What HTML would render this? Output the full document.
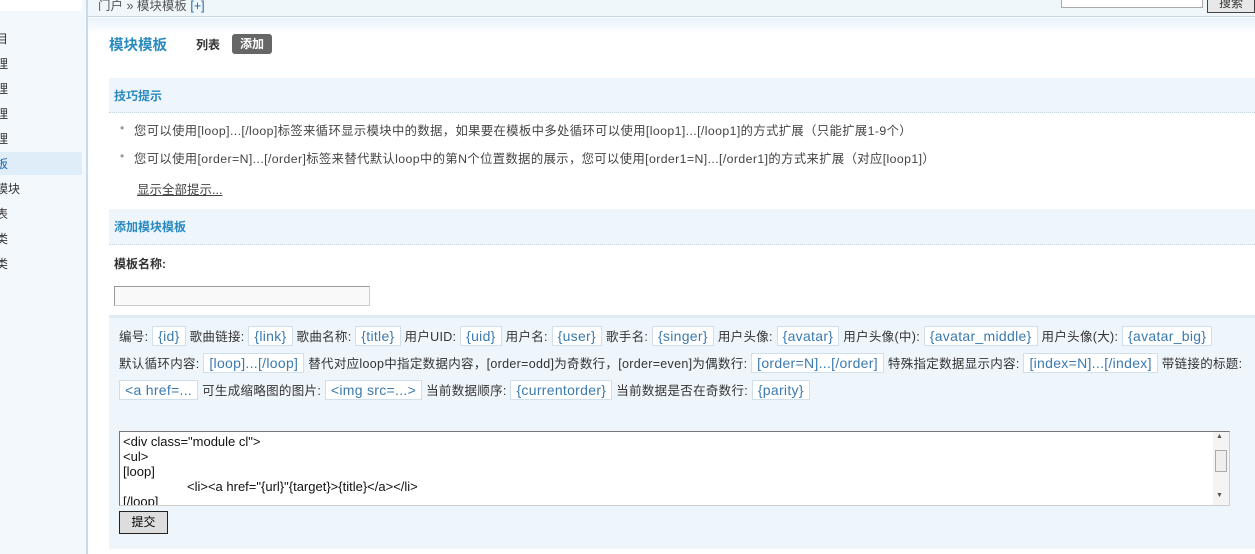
<!DOCTYPE html>
<html><head><meta charset="utf-8"><style>
*{margin:0;padding:0;box-sizing:border-box}
body{width:1255px;height:554px;overflow:hidden;background:#fff;font:12px "Liberation Sans","Noto Sans CJK SC",sans-serif;color:#333;position:relative}
.a{position:absolute;white-space:nowrap}
.side{left:0;top:0;width:88px;height:554px;background:#f2f8fc;border-right:2px solid #c5dbec}
.top{left:88px;top:0;width:1167px;height:17px;background:#f0f7fb;border-bottom:1px solid #c5d6e4}
.si{left:-4px;font-size:12px;color:#333}
.tag{display:inline-block;border:1px solid #cfe0ec;background:#fff;color:#3a7ab0;padding:0 5px;height:20px;line-height:18px;font-size:14px;margin-right:4px}
.row{left:119px;font-size:12.5px;line-height:22px;letter-spacing:0.3px}
.tip{letter-spacing:0.4px;font-size:12.3px}
</style></head><body>
<div class="a side"></div>
<div class="a" style="left:0;top:0;width:82px;height:11px;background:#fff"></div>
<div class="a" style="left:0;top:152px;width:82px;height:23px;background:#dfedf8"></div>
<div class="a si" style="top:30px">目</div>
<div class="a si" style="top:55px">理</div>
<div class="a si" style="top:80px">理</div>
<div class="a si" style="top:105px">理</div>
<div class="a si" style="top:130px">理</div>
<div class="a si" style="top:155px;color:#2366a8">板</div>
<div class="a si" style="top:180px">模块</div>
<div class="a si" style="top:205px">表</div>
<div class="a si" style="top:230px">类</div>
<div class="a si" style="top:255px">类</div>
<div class="a top"></div>
<div class="a" style="left:98px;top:-5px;color:#555;font-size:12.5px">门户 » 模块模板 <span style="color:#2366a8">[+]</span></div>
<div class="a" style="left:1061px;top:-2px;width:142px;height:10px;background:#fff;border:1px solid #aaa;border-top:none"></div>
<div class="a" style="left:1207px;top:-6px;width:48px;height:19px;background:#e8e8e8;border:1px solid #444;text-align:center;line-height:16px;font-size:12px">搜索</div>
<div class="a" style="left:88px;top:18px;width:1167px;height:16px;background:linear-gradient(#eaf3fa,#fff)"></div>
<div class="a" style="left:109px;top:34px;font-size:14.5px;font-weight:bold;color:#2a8ac0">模块模板</div>
<div class="a" style="left:196px;top:36px;font-size:12px;font-weight:bold;color:#333">列表</div>
<div class="a" style="left:232px;top:34px;width:40px;height:20px;background:#666;color:#fff;border-radius:3px;font-weight:bold;text-align:center;line-height:20px;font-size:12px">添加</div>
<div class="a" style="left:109px;top:78px;width:1146px;height:35px;background:#eef5fb;border-bottom:1px dotted #c5d6e4"></div>
<div class="a" style="left:114px;top:87px;font-weight:bold;color:#2a8ac0">技巧提示</div>
<div class="a" style="left:120px;top:121px;color:#999">•</div>
<div class="a tip" style="left:134px;top:121px;color:#444">您可以使用[loop]...[/loop]标签来循环显示模块中的数据，如果要在模板中多处循环可以使用[loop1]...[/loop1]的方式扩展（只能扩展1-9个）</div>
<div class="a" style="left:120px;top:149px;color:#999">•</div>
<div class="a tip" style="left:134px;top:149px;color:#444">您可以使用[order=N]...[/order]标签来替代默认loop中的第N个位置数据的展示，您可以使用[order1=N]...[/order1]的方式来扩展（对应[loop1]）</div>
<div class="a" style="left:137px;top:179px;color:#444;text-decoration:underline;font-size:12.5px">显示全部提示...</div>
<div class="a" style="left:109px;top:209px;width:1146px;height:36px;background:#eef5fb;border-bottom:1px dotted #c5d6e4"></div>
<div class="a" style="left:114px;top:218px;font-weight:bold;color:#2a8ac0">添加模块模板</div>
<div class="a" style="left:114px;top:255px;font-weight:bold;color:#333">模板名称:</div>
<div class="a" style="left:114px;top:286px;width:256px;height:20px;border:1px solid #999;border-right-color:#ccc;border-bottom-color:#ccc;background:#f9f9f9"></div>
<div class="a" style="left:109px;top:315px;width:1146px;height:234px;background:#eef5fb;border-top:3px solid #e0ecf5"></div>
<div class="a row" style="top:326px">编号: <span class="tag">{id}</span>歌曲链接: <span class="tag">{link}</span>歌曲名称: <span class="tag">{title}</span>用户UID: <span class="tag">{uid}</span>用户名: <span class="tag">{user}</span>歌手名: <span class="tag">{singer}</span>用户头像: <span class="tag">{avatar}</span>用户头像(中): <span class="tag">{avatar_middle}</span>用户头像(大): <span class="tag">{avatar_big}</span></div>
<div class="a row" style="top:353px">默认循环内容: <span class="tag">[loop]...[/loop]</span>替代对应loop中指定数据内容，[order=odd]为奇数行，[order=even]为偶数行: <span class="tag">[order=N]...[/order]</span>特殊指定数据显示内容: <span class="tag">[index=N]...[/index]</span>带链接的标题:</div>
<div class="a row" style="top:380px"><span class="tag">&lt;a href=...</span>可生成缩略图的图片: <span class="tag">&lt;img src=...&gt;</span>当前数据顺序: <span class="tag">{currentorder}</span>当前数据是否在奇数行: <span class="tag">{parity}</span></div>
<div class="a" style="left:119px;top:431px;width:1111px;height:75px;background:#fff;border:1px solid #777;border-right-color:#ccc;border-bottom-color:#ccc;overflow:hidden;padding:2px 3px;font-size:13px;line-height:15px;color:#111"><div>&lt;div class="module cl"&gt;<br>&lt;ul&gt;<br>[loop]<br><span style="padding-left:64px">&lt;li&gt;&lt;a href="{url}"{target}&gt;{title}&lt;/a&gt;&lt;/li&gt;</span><br>[/loop]</div></div>
<div class="a" style="left:1213px;top:432px;width:16px;height:73px;background:#f4f4f4"></div>
<div class="a" style="left:1216px;top:433px;font-size:7px;color:#555">▲</div>
<div class="a" style="left:1215px;top:450px;width:12px;height:22px;background:#eee;border:1px solid #aaa"></div>
<div class="a" style="left:1216px;top:492px;font-size:7px;color:#555">▼</div>
<div class="a" style="left:119px;top:511px;width:49px;height:23px;background:#ddd;border:1px solid #222;text-align:center;line-height:21px;font-size:12px;color:#000">提交</div>
</body></html>
